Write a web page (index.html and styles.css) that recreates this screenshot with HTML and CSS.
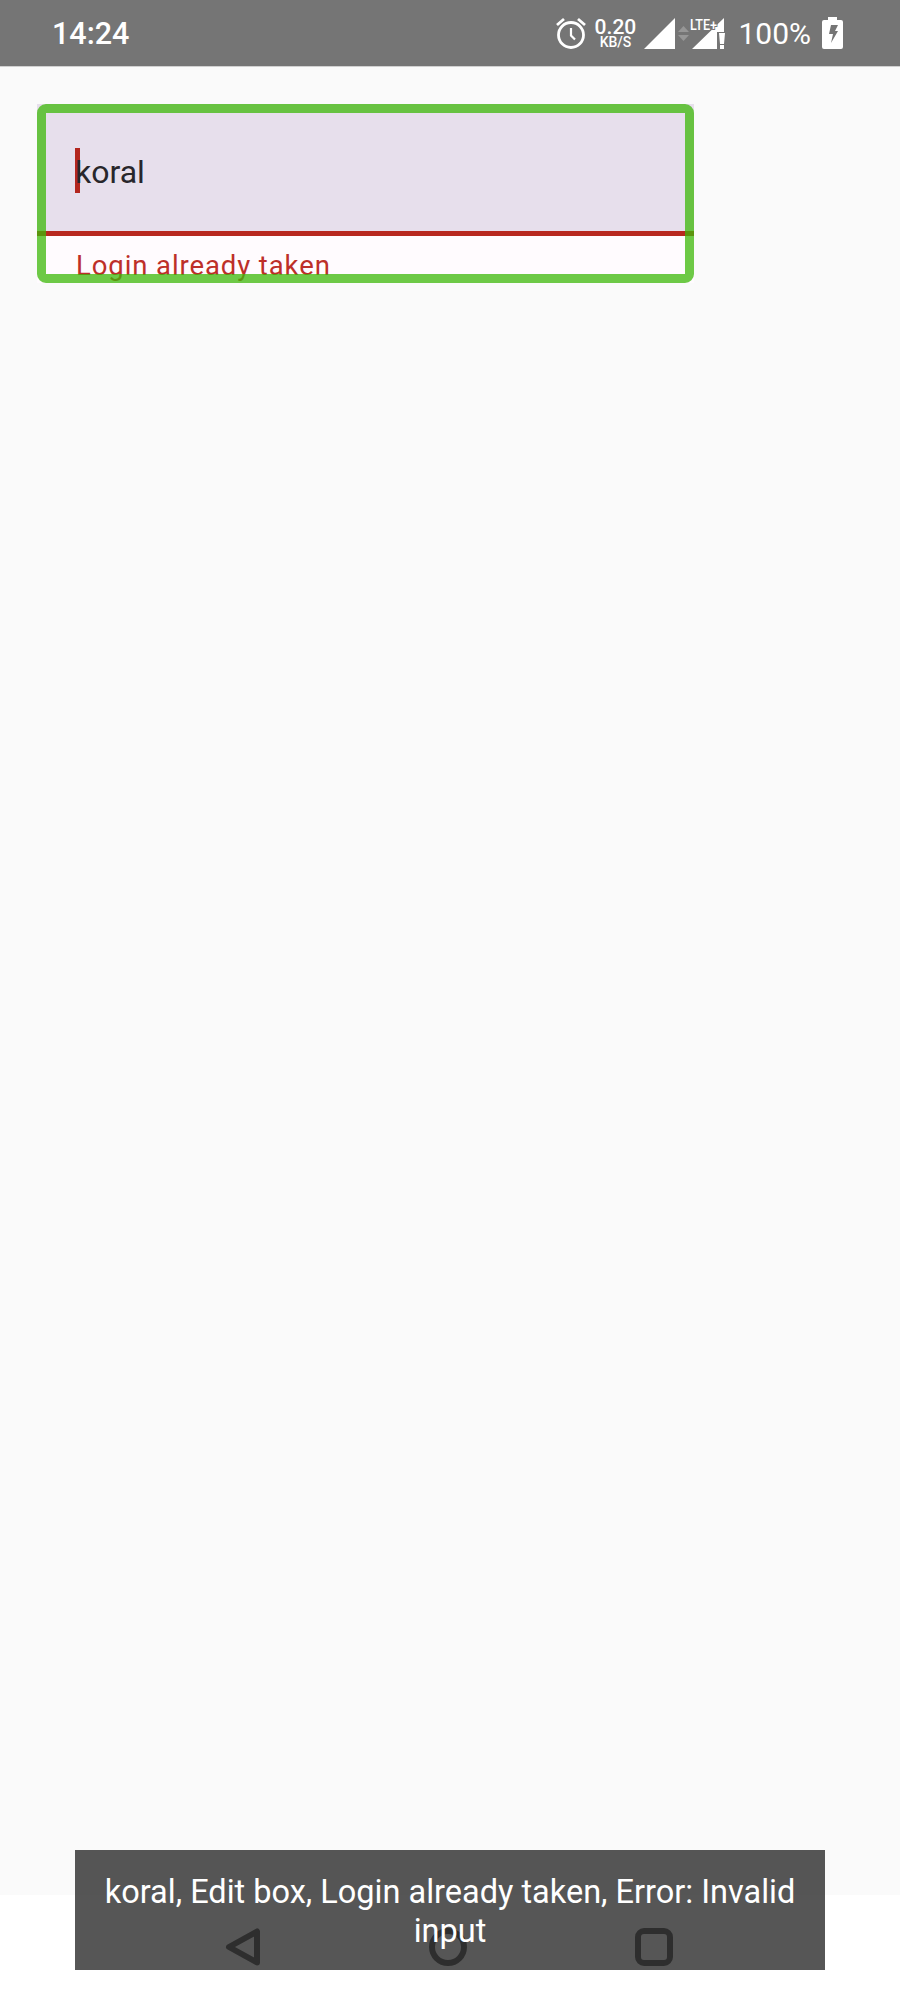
FILE: index.html
```html
<!DOCTYPE html>
<html lang="en">
<head>
  <meta charset="UTF-8">
  <meta name="viewport" content="width=device-width, initial-scale=1.0">
  <title>Login field</title>
  <link rel="stylesheet" href="styles.css">
</head>
<body>
  <header class="status-bar">
    <span class="status-time">14:24</span>
    <div class="status-icons">
      <svg class="icon-alarm" width="32" height="34" viewBox="0 0 32 34">
        <circle cx="16" cy="19" r="12.5" fill="none" stroke="#fff" stroke-width="2.8"/>
        <path d="M16 12v7.5l4 4" fill="none" stroke="#fff" stroke-width="2.2"/>
        <path d="M2 9l7-6M30 9l-7-6" fill="none" stroke="#fff" stroke-width="2.8"/>
      </svg>
      <div class="net-speed">
        <span class="net-value">0.20</span>
        <span class="net-unit">KB/S</span>
      </div>
      <svg class="icon-signal" width="31" height="31" viewBox="0 0 31 31">
        <path d="M0 31L31 0v31z" fill="#fff"/>
      </svg>
      <svg class="icon-arrows" width="11" height="15" viewBox="0 0 11 15">
        <path d="M5.5 0L11 6H0z" fill="#969696"/>
        <path d="M5.5 15L0 9h11z" fill="#969696"/>
      </svg>
      <svg class="icon-lte" width="35" height="31" viewBox="0 0 35 31">
        <path d="M2 31L34 0v14h-7v17z" fill="#fff"/>
        <path d="M29 15h6l-1 11h-4zM30 27h4v4h-4z" fill="#fff"/>
        <text x="0" y="12" class="lte-text" textLength="27" lengthAdjust="spacingAndGlyphs">LTE+</text>
      </svg>
      <span class="status-battery">100%</span>
      <svg class="icon-battery" width="21" height="32" viewBox="0 0 21 32">
        <path d="M6 0h9v3h4q2 0 2 2v25q0 2-2 2H2q-2 0-2-2V5q0-2 2-2h4z" fill="#fff"/>
        <path d="M9 8h7l-3 6h3l-7 12 2-9H7z" fill="#757575"/>
      </svg>
    </div>
  </header>

  <main class="content">
    <div class="field">
      <div class="field-input">
        <span class="caret"></span>
        <span class="field-value">koral</span>
      </div>
      <div class="field-line"></div>
      <div class="field-helper">Login already taken</div>
      <div class="field-highlight"></div>
    </div>
  </main>

  <nav class="nav-bar">
    <svg width="36" height="38" viewBox="0 0 36 38">
      <path d="M32 3.5v31L4 19z" fill="none" stroke="#2f2f2f" stroke-width="6" stroke-linejoin="round"/>
    </svg>
    <svg width="38" height="38" viewBox="0 0 38 38">
      <circle cx="19" cy="19" r="16" fill="none" stroke="#2f2f2f" stroke-width="6"/>
    </svg>
    <svg width="38" height="38" viewBox="0 0 38 38">
      <rect x="3" y="3" width="32" height="32" rx="6" fill="none" stroke="#2f2f2f" stroke-width="6"/>
    </svg>
  </nav>

  <div class="toast">koral, Edit box, Login already taken, Error: Invalid input</div>
</body>
</html>
```

FILE: styles.css
```css
body {
  margin: 0;
  padding: 0;
  height: 1999px;
  position: relative;
  display: flex;
  flex-direction: column;
  overflow: hidden;
  background: #fff;
  font-family: Roboto, "Liberation Sans", sans-serif;
}

.status-bar {
  height: 66px;
  flex: none;
  display: flex;
  align-items: center;
  padding: 0 57px 0 52px;
  background: #757575;
  border-bottom: 1px solid #d0d0d0;
  color: #fff;
}

.status-time {
  font-size: 30.5px;
  font-weight: 500;
}

.status-icons {
  margin-left: auto;
  display: flex;
  align-items: center;
}

.icon-alarm {
  margin-right: 8px;
}

.net-speed {
  width: 40px;
  margin-right: 9px;
  display: flex;
  flex-direction: column;
  align-items: center;
  font-weight: 500;
  line-height: 1;
}

.net-value {
  font-size: 21px;
  line-height: 18px;
}

.net-unit {
  font-size: 14px;
  line-height: 13px;
}

.icon-arrows {
  margin: 0 1px 0 3px;
}

.icon-lte {
  overflow: visible;
}

.lte-text {
  font-size: 15px;
  font-weight: 500;
  fill: #fff;
  stroke: #757575;
  stroke-width: 2px;
  paint-order: stroke;
}

.status-battery {
  margin-left: 13px;
  font-size: 30px;
}

.icon-battery {
  margin-left: 11px;
}

.content {
  flex: 1;
  padding: 37px 37px 0;
  background: #fafafa;
}

.field {
  width: 657px;
  height: 179px;
  position: relative;
}

.field-input {
  height: 127px;
  box-sizing: border-box;
  padding: 44px 0 0 38px;
  display: flex;
  align-items: flex-start;
  background: #e7dfec;
}

.caret {
  width: 5px;
  height: 45px;
  margin-right: -5px;
  background: #b3261e;
}

.field-value {
  margin-top: 4px;
  font-size: 32px;
  line-height: 40px;
  color: #28262b;
}

.field-line {
  height: 5px;
  background: #b8281f;
}

.field-helper {
  height: 47px;
  padding: 14px 0 0 39px;
  box-sizing: border-box;
  background: #fffbfe;
  font-size: 27.5px;
  line-height: 32px;
  letter-spacing: 0.9px;
  color: #bd2f28;
}

/* accessibility focus rectangle drawn on top of the field */
.field-highlight {
  position: absolute;
  inset: 0;
  border: 9px solid rgba(60, 184, 8, 0.75);
  border-radius: 9px;
}

.nav-bar {
  height: 104px;
  flex: none;
  box-sizing: border-box;
  padding: 33px 0 0 225px;
  display: flex;
  align-items: flex-start;
  gap: 168px;
  background: #fff;
}

.toast {
  position: absolute;
  left: 75px;
  bottom: 29px;
  width: 750px;
  height: 120px;
  box-sizing: border-box;
  padding: 23px 10px 0;
  background: rgba(47, 47, 47, 0.81);
  color: #fff;
  font-size: 32.5px;
  line-height: 39px;
  text-align: center;
}
```
